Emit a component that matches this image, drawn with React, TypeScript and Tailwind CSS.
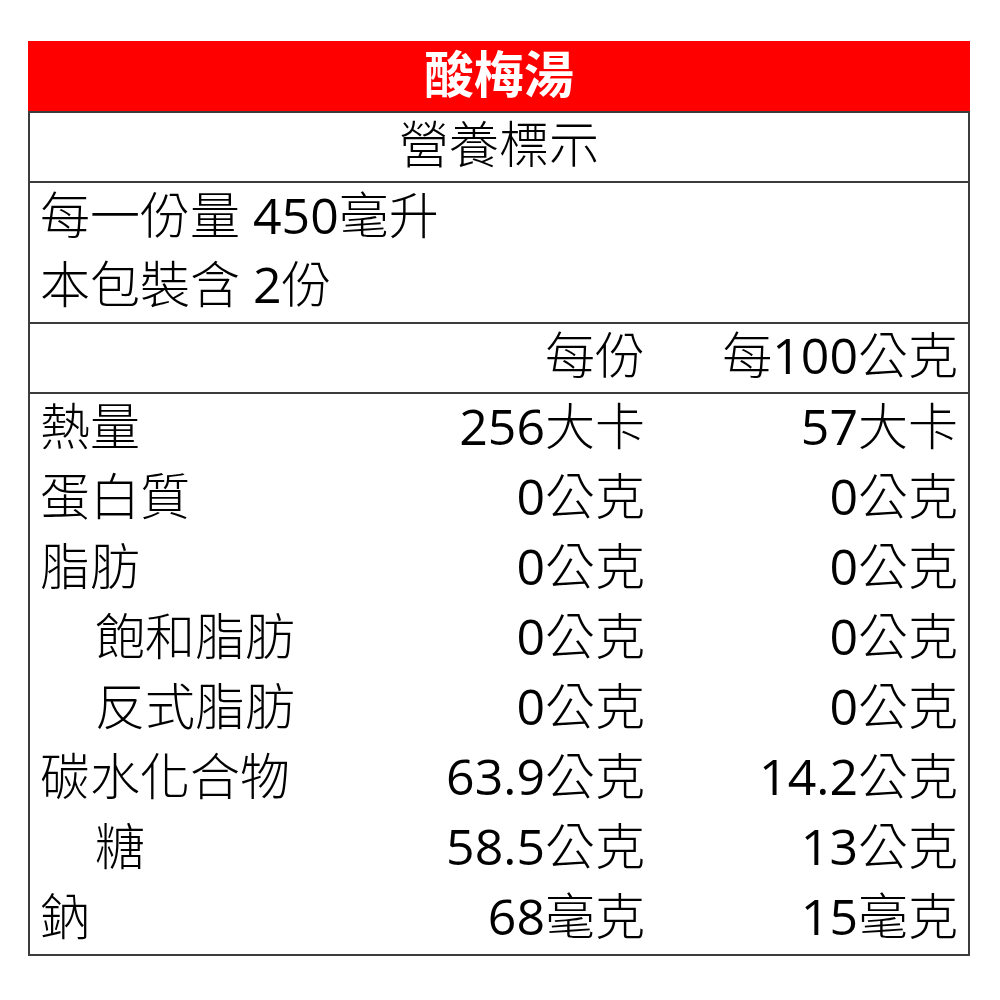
const FONT = "font-['Open_Sans','Noto_Sans_CJK_TC',sans-serif]";

type Row = { label: string; indent?: boolean; perServing: string; per100: string };

const ROWS: Row[] = [
  { label: "熱量", perServing: "256大卡", per100: "57大卡" },
  { label: "蛋白質", perServing: "0公克", per100: "0公克" },
  { label: "脂肪", perServing: "0公克", per100: "0公克" },
  { label: "飽和脂肪", indent: true, perServing: "0公克", per100: "0公克" },
  { label: "反式脂肪", indent: true, perServing: "0公克", per100: "0公克" },
  { label: "碳水化合物", perServing: "63.9公克", per100: "14.2公克" },
  { label: "糖", indent: true, perServing: "58.5公克", per100: "13公克" },
  { label: "鈉", perServing: "68毫克", per100: "15毫克" },
];

// digits look regular weight next to the thin CJK glyphs, so split them out
function Txt({ children }: { children: string }) {
  const parts = children.split(/([0-9.]+)/);
  return (
    <>
      {parts.map((p, i) =>
        /^[0-9.]+$/.test(p) ? (
          <span key={i} className="font-normal">
            {p}
          </span>
        ) : (
          <span key={i}>{p}</span>
        ),
      )}
    </>
  );
}

function DataRow({ label, indent, perServing, per100 }: Row) {
  return (
    <div className="flex h-[70px] items-center px-[10px] pb-[6px] leading-[64px]">
      <div className={indent ? "flex-1 pl-[55px]" : "flex-1"}>{label}</div>
      <div className="w-[230px] text-right">
        <Txt>{perServing}</Txt>
      </div>
      <div className="w-[313px] text-right">
        <Txt>{per100}</Txt>
      </div>
    </div>
  );
}

export default function App() {
  return (
    <div className={`min-h-[1000px] w-[1000px] bg-white pl-[28px] pt-[41px] text-[50px] font-light text-black ${FONT}`}>
      <div className="w-[942px]">
        <div className="flex h-[70px] items-center justify-center bg-[#ff0000] pb-[4px] font-bold leading-[66px] text-white">
          酸梅湯
        </div>
        <div className="border-2 border-[#3c3c3c]">
          <div className="flex h-[68px] items-center justify-center pb-[6px] leading-[62px]">營養標示</div>
          <div className="flex h-[141px] flex-col justify-center border-t-2 border-[#3c3c3c] pb-[6px] pl-[10px]">
            <div className="h-[69px] leading-[69px]">
              <Txt>每一份量 450毫升</Txt>
            </div>
            <div className="h-[69px] leading-[69px]">
              <Txt>本包裝含 2份</Txt>
            </div>
          </div>
          <div className="flex h-[70px] items-center border-t-2 border-[#3c3c3c] px-[10px] pb-[6px] leading-[64px]">
            <div className="flex-1" />
            <div className="w-[230px] text-right">每份</div>
            <div className="w-[313px] text-right">
              <Txt>每100公克</Txt>
            </div>
          </div>
          <div className="border-t-2 border-[#3c3c3c]">
            {ROWS.map((r) => (
              <DataRow key={r.label} {...r} />
            ))}
          </div>
        </div>
      </div>
    </div>
  );
}
